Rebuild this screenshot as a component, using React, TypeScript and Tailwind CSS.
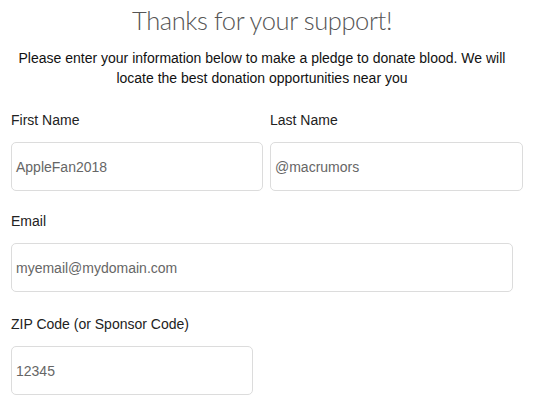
export default function App() {
  return (
    <div
      className="min-h-screen w-[533px] bg-white text-[#111]"
      style={{ fontFamily: '"Liberation Sans", Arial, sans-serif' }}
    >
      <h1
        className="h-[38px] w-[524px] pt-[2px] text-center text-[25.5px] font-light leading-[36px] tracking-[-0.4px] text-[#555]"
        style={{ fontFamily: 'Lato, Roboto, "Liberation Sans", sans-serif' }}
      >
        Thanks for your support!
      </h1>
      <p className="ml-[12px] mt-[11px] w-[500px] text-center text-[14px] leading-[19.5px] text-[#111]">
        Please enter your information below to make a pledge to donate blood. We will locate the best
        donation opportunities near you
      </p>

      {/* name row */}
      <div className="mt-[22px] flex gap-[7px] pl-[11px]">
        <Field label="First Name" value="AppleFan2018" width="w-[252px]" />
        <Field label="Last Name" value="@macrumors" width="w-[253px]" />
      </div>
      <div className="mt-[20px] pl-[11px]">
        <Field label="Email" value="myemail@mydomain.com" width="w-[502px]" />
      </div>
      <div className="mt-[22px] pl-[11px]">
        <Field label="ZIP Code (or Sponsor Code)" value="12345" width="w-[242px]" />
      </div>
    </div>
  );
}

function Field({ label, value, width }: { label: string; value: string; width: string }) {
  return (
    <div className={width}>
      <div className="h-[20px] text-[14px] leading-[20px] text-[#222]">{label}</div>
      <div className="mt-[12px] flex h-[49px] items-center rounded-[5px] border border-[#dcdcdc] px-[4px] pt-[2px] text-[14px] text-[#666]">
        {value}
      </div>
    </div>
  );
}
